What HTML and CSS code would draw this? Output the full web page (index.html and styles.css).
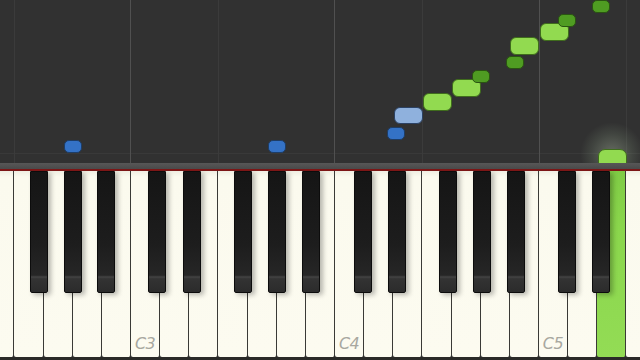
FILE: index.html
```html
<!DOCTYPE html>
<html>
<head>
<meta charset="utf-8">
<link rel="stylesheet" href="styles.css">
</head>
<body>
<div class="screen">
  <div class="roll">
    <div class="hline"></div>
    <div class="vline dim" style="left:14px"></div>
    <div class="vline" style="left:130px"></div>
    <div class="vline dim" style="left:218px"></div>
    <div class="vline" style="left:334px"></div>
    <div class="vline dim" style="left:422px"></div>
    <div class="vline" style="left:539px"></div>
    <div class="vline dim" style="left:626px"></div>

    <div class="glow"></div>

    <div class="note blue dark" style="left:64px;top:140px"></div>
    <div class="note blue dark" style="left:268px;top:140px"></div>
    <div class="note blue dark" style="left:387px;top:127px"></div>
    <div class="note blue light" style="left:394px;top:107px"></div>
    <div class="note green light" style="left:423px;top:93px"></div>
    <div class="note green light" style="left:452px;top:79px"></div>
    <div class="note green dark" style="left:472px;top:70px"></div>
    <div class="note green dark" style="left:506px;top:56px"></div>
    <div class="note green light" style="left:510px;top:37px"></div>
    <div class="note green light" style="left:540px;top:23px"></div>
    <div class="note green dark" style="left:558px;top:14px"></div>
    <div class="note green dark" style="left:592px;top:0px"></div>
    <div class="note green light playing" style="left:598px;top:149px"></div>
  </div>
  <div class="bar"></div>
  <div class="redline"></div>
  <div class="keyboard">
    <div class="whites">
      <div class="wk"></div>
      <div class="wk"></div>
      <div class="wk"></div>
      <div class="wk"></div>
      <div class="wk"></div>
      <div class="wk"><span class="lbl">C3</span></div>
      <div class="wk"></div>
      <div class="wk"></div>
      <div class="wk"></div>
      <div class="wk"></div>
      <div class="wk"></div>
      <div class="wk"></div>
      <div class="wk"><span class="lbl">C4</span></div>
      <div class="wk"></div>
      <div class="wk"></div>
      <div class="wk"></div>
      <div class="wk"></div>
      <div class="wk"></div>
      <div class="wk"></div>
      <div class="wk"><span class="lbl">C5</span></div>
      <div class="wk"></div>
      <div class="wk on"></div>
      <div class="wk"></div>
    </div>
    <div class="bk" style="left:30px"></div>
    <div class="bk" style="left:64px"></div>
    <div class="bk" style="left:97px"></div>
    <div class="bk" style="left:148px"></div>
    <div class="bk" style="left:183px"></div>
    <div class="bk" style="left:234px"></div>
    <div class="bk" style="left:268px"></div>
    <div class="bk" style="left:302px"></div>
    <div class="bk" style="left:354px"></div>
    <div class="bk" style="left:388px"></div>
    <div class="bk" style="left:439px"></div>
    <div class="bk" style="left:473px"></div>
    <div class="bk" style="left:507px"></div>
    <div class="bk" style="left:558px"></div>
    <div class="bk" style="left:592px"></div>
  </div>
  <div class="bottom"></div>
</div>
</body>
</html>
```

FILE: styles.css
```css
html, body {
  margin: 0;
  padding: 0;
  background: #2f2f2f;
}
.screen {
  width: 640px;
  height: 360px;
  overflow: hidden;
  display: flex;
  flex-direction: column;
}
.roll {
  position: relative;
  height: 163px;
  flex: none;
  background: #313131;
  overflow: hidden;
}
.hline {
  position: absolute;
  left: 0;
  right: 0;
  top: 153px;
  height: 1px;
  background: #393939;
}
.vline {
  position: absolute;
  top: 0;
  bottom: 0;
  width: 1px;
  background: #505050;
}
.vline.dim {
  background: #3b3b3b;
}
.glow {
  position: absolute;
  left: 580px;
  top: 122px;
  width: 64px;
  height: 64px;
  border-radius: 50%;
  background: radial-gradient(circle at 50% 50%, rgba(225,245,210,0.30) 0%, rgba(180,210,170,0.12) 45%, rgba(60,60,60,0) 70%);
}
.note {
  position: absolute;
  box-sizing: border-box;
  border-radius: 5px;
}
.note.dark {
  width: 18px;
  height: 13px;
}
.note.light {
  width: 29px;
  height: 18px;
  border-radius: 6px;
}
.note.blue.dark {
  background: #3472c6;
  border: 1px solid #1e3d66;
}
.note.blue.light {
  background: #8fb1dd;
  border: 1px solid #2c4264;
  height: 17px;
}
.note.green.dark {
  background: #4f9c22;
  border: 1px solid #2a5412;
}
.note.green.light {
  background: #92da50;
  border: 1px solid #3f6c1c;
}
.note.playing {
  height: 20px;
  background: linear-gradient(#a6e66e, #8fd64e);
  border-color: #8cc860;
  border-radius: 7px 7px 0 0;
}
.bar {
  height: 6px;
  flex: none;
  background: linear-gradient(#575757, #4a4a4a);
}
.redline {
  height: 2px;
  flex: none;
  background: #7c1616;
}
.keyboard {
  position: relative;
  height: 186px;
  flex: none;
  overflow: hidden;
}
.whites {
  display: flex;
  height: 100%;
  margin-left: -14.71px;
}
.wk {
  flex: none;
  width: 29.143px;
  height: 100%;
  box-sizing: border-box;
  background: linear-gradient(#efeee2 0px, #fbfaee 6px, #fcfbf0 100%);
  border-right: 1px solid #3a3a36;
  border-radius: 0 0 2px 2px;
  display: flex;
  align-items: flex-end;
  justify-content: center;
}
.wk.on {
  background: linear-gradient(#7fcb45 0px, #8ad64c 30%, #93dc55 100%);
}
.lbl {
  font-family: "DejaVu Sans", "Liberation Sans", sans-serif;
  font-style: italic;
  font-size: 16px;
  color: #a8a8a0;
  margin-bottom: 4px;
  letter-spacing: -0.5px;
}
.bk {
  position: absolute;
  top: 0;
  width: 18px;
  height: 122px;
  box-sizing: border-box;
  border: 1px solid #0c0c0c;
  border-radius: 0 0 2px 2px;
  background: linear-gradient(#151515 0px, #1d1d1d 60%, #262626 86%, #303030 86.5%, #444 87.5%, #333 89%, #2b2b2b 100%);
  box-shadow: 3px 2px 5px rgba(0,0,0,0.28);
}
.bottom {
  height: 3px;
  flex: none;
  background: #2a2a28;
}
```
